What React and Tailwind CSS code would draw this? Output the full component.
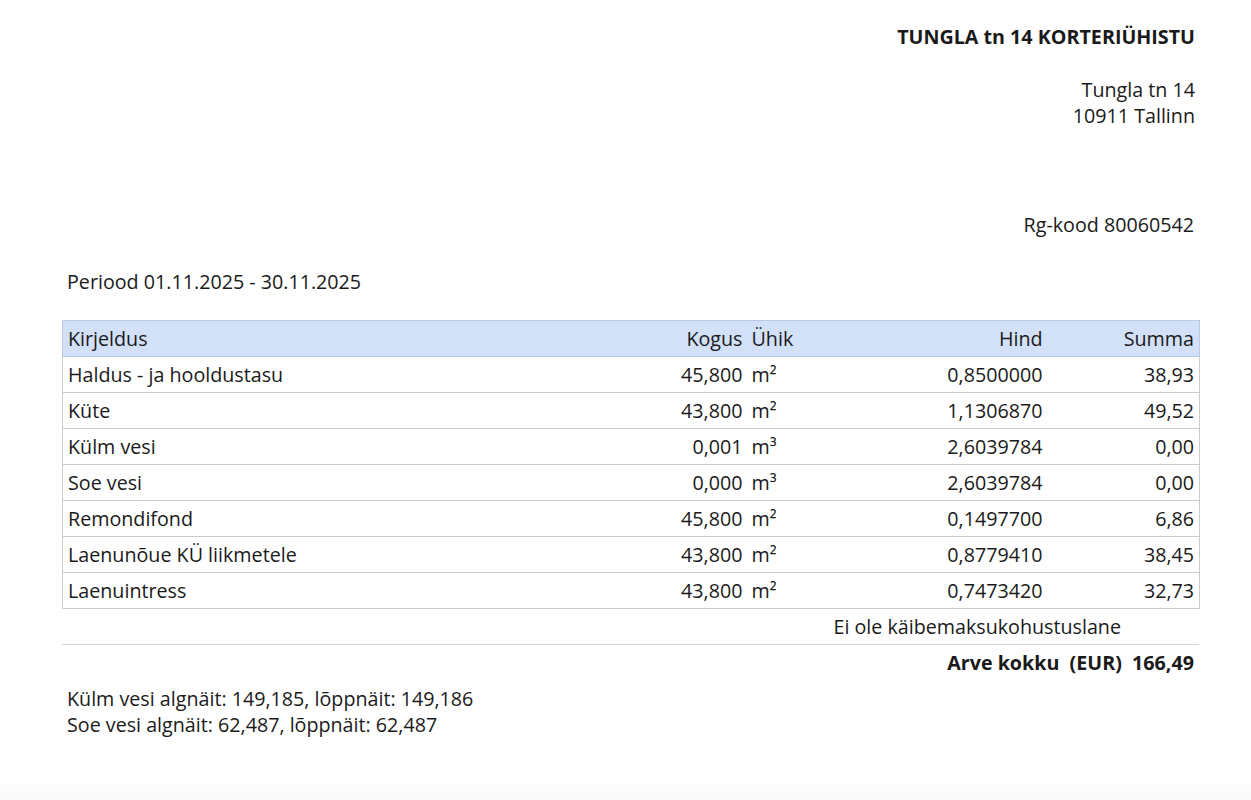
import React from "react";

const rows = [
  ["Haldus - ja hooldustasu", "45,800", "m²", "0,8500000", "38,93"],
  ["Küte", "43,800", "m²", "1,1306870", "49,52"],
  ["Külm vesi", "0,001", "m³", "2,6039784", "0,00"],
  ["Soe vesi", "0,000", "m³", "2,6039784", "0,00"],
  ["Remondifond", "45,800", "m²", "0,1497700", "6,86"],
  ["Laenunõue KÜ liikmetele", "43,800", "m²", "0,8779410", "38,45"],
  ["Laenuintress", "43,800", "m²", "0,7473420", "32,73"],
];

export default function App() {
  return (
    <div
      className="w-[1251px] h-[800px] bg-white text-[#1a1a1a] text-[19.7px] leading-[26px] flex flex-col"
      style={{ fontFamily: '"Open Sans", "Noto Sans", sans-serif' }}
    >
      <div className="flex-1 pl-[62px] pr-[52px] pt-[24px] flex flex-col">
        <div className="text-right pr-[4px] font-bold">TUNGLA tn 14 KORTERIÜHISTU</div>
        <div className="text-right pr-[4px] mt-[27px]">
          <div>Tungla tn 14</div>
          <div>10911 Tallinn</div>
        </div>
        <div className="text-right pr-[5px] mt-[83px]">Rg-kood 80060542</div>
        <div className="pl-[5px] mt-[31px]">Periood 01.11.2025 - 30.11.2025</div>
        <table className="mt-[25px] w-[1137px] border-collapse table-fixed">
          <colgroup>
            <col className="w-[538px]" />
            <col className="w-[147px]" />
            <col className="w-[113px]" />
            <col className="w-[187px]" />
            <col className="w-[152px]" />
          </colgroup>
          <thead>
            <tr className="bg-[#d2e0f8] h-[36px]">
              <th className="font-normal text-left pl-[5px] border-l border-y border-[#b9c9e4]">Kirjeldus</th>
              <th className="font-normal text-right pr-[5px] border-y border-[#b9c9e4]">Kogus</th>
              <th className="font-normal text-left pl-[4px] border-y border-[#b9c9e4]">Ühik</th>
              <th className="font-normal text-right pr-[5px] border-y border-[#b9c9e4]">Hind</th>
              <th className="font-normal text-right pr-[5px] border-r border-y border-[#b9c9e4]">Summa</th>
            </tr>
          </thead>
          <tbody>
            {rows.map((r, i) => (
              <tr key={i} className="h-[36px]">
                <td className="text-left pl-[5px] border-l border-b border-[#cccccc]">{r[0]}</td>
                <td className="text-right pr-[5px] border-b border-[#cccccc]">{r[1]}</td>
                <td className="text-left pl-[4px] border-b border-[#cccccc]">{r[2]}</td>
                <td className="text-right pr-[5px] border-b border-[#cccccc]">{r[3]}</td>
                <td className="text-right pr-[5px] border-r border-b border-[#cccccc]">{r[4]}</td>
              </tr>
            ))}
          </tbody>
        </table>
        <div className="text-right pr-[78px] mt-[5px]">Ei ole käibemaksukohustuslane</div>
        <div className="mt-[4px] h-px bg-[#d4d4d4] w-[1137px]" />
        <div className="text-right pr-[5px] mt-[5px] font-bold whitespace-pre">
          {"Arve kokku  (EUR)  166,49"}
        </div>
        <div className="pl-[5px] mt-[10px]">
          <div>Külm vesi algnäit: 149,185, lõppnäit: 149,186</div>
          <div>Soe vesi algnäit: 62,487, lõppnäit: 62,487</div>
        </div>
      </div>
      <div className="h-[16px] bg-gradient-to-b from-[#fdfdfd] to-[#f8f8f8]" />
    </div>
  );
}
